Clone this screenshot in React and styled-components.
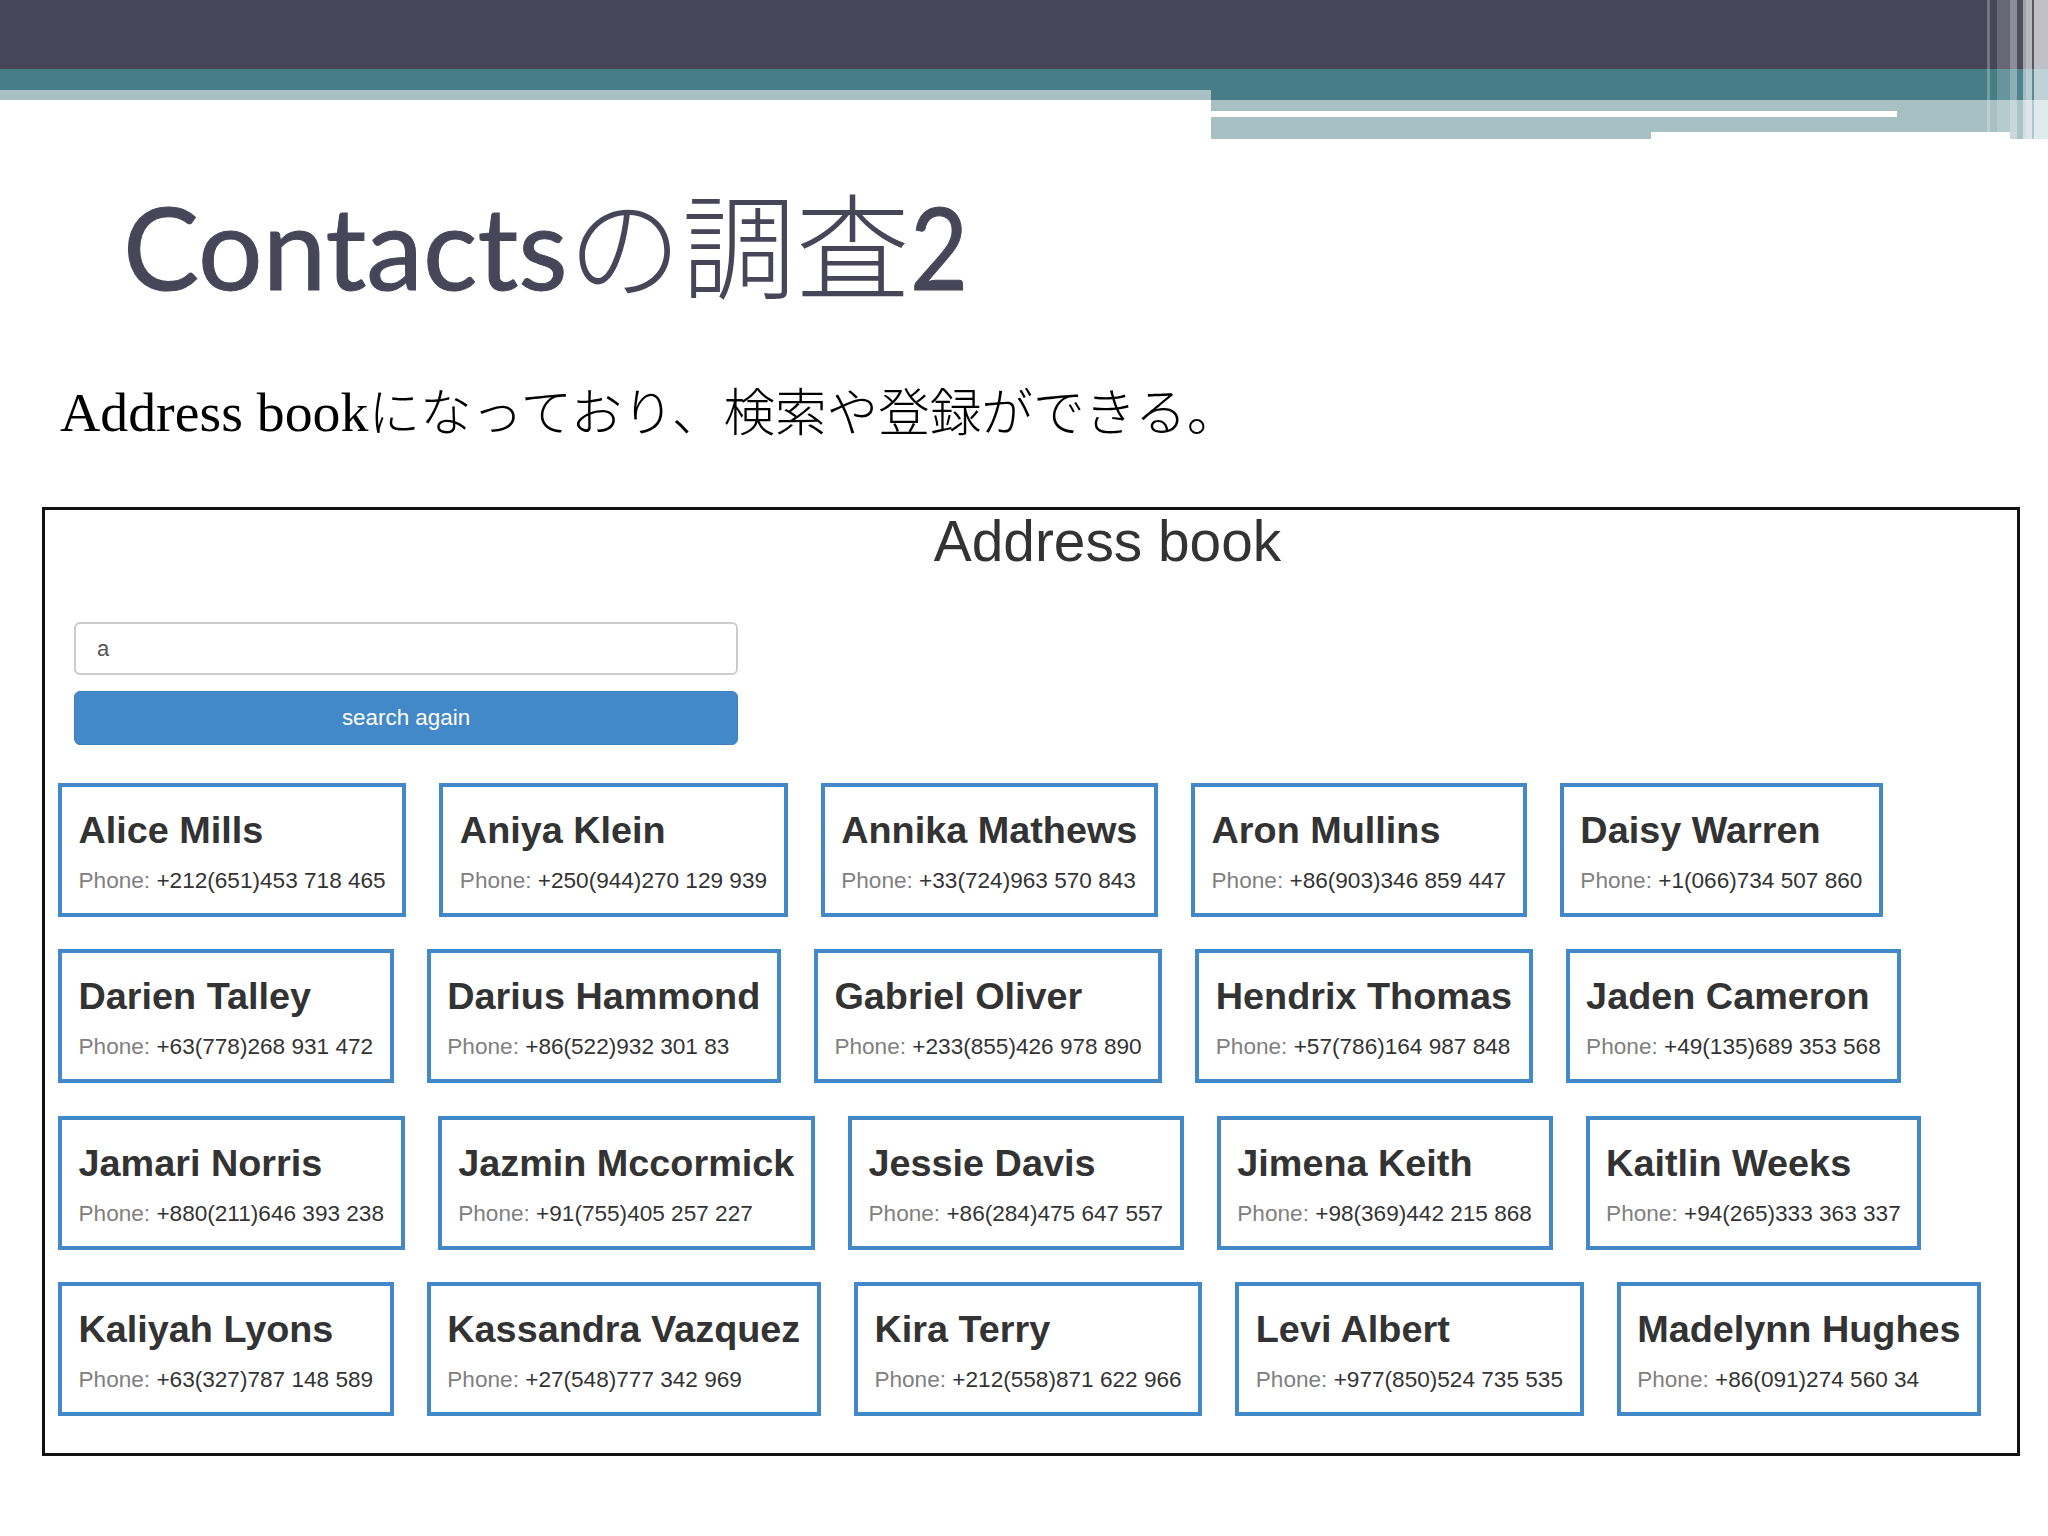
import styled, { createGlobalStyle } from "styled-components";

const rows = [
  [
    ["Alice Mills", "+212(651)453 718 465"],
    ["Aniya Klein", "+250(944)270 129 939"],
    ["Annika Mathews", "+33(724)963 570 843"],
    ["Aron Mullins", "+86(903)346 859 447"],
    ["Daisy Warren", "+1(066)734 507 860"],
  ],
  [
    ["Darien Talley", "+63(778)268 931 472"],
    ["Darius Hammond", "+86(522)932 301 83"],
    ["Gabriel Oliver", "+233(855)426 978 890"],
    ["Hendrix Thomas", "+57(786)164 987 848"],
    ["Jaden Cameron", "+49(135)689 353 568"],
  ],
  [
    ["Jamari Norris", "+880(211)646 393 238"],
    ["Jazmin Mccormick", "+91(755)405 257 227"],
    ["Jessie Davis", "+86(284)475 647 557"],
    ["Jimena Keith", "+98(369)442 215 868"],
    ["Kaitlin Weeks", "+94(265)333 363 337"],
  ],
  [
    ["Kaliyah Lyons", "+63(327)787 148 589"],
    ["Kassandra Vazquez", "+27(548)777 342 969"],
    ["Kira Terry", "+212(558)871 622 966"],
    ["Levi Albert", "+977(850)524 735 535"],
    ["Madelynn Hughes", "+86(091)274 560 34"],
  ],
];

const stripes = [
  [3, 0.25],
  [7, 0],
  [13, 0.18],
  [7, 0.38],
  [6, 0.05],
  [3, 0.5],
  [6, 0.62],
  [2, 0.1],
  [14, 0.66],
];

export default function App() {
  return (
    <Slide>
      <GlobalStyle />
      <Header>
        <TopBand />
        <Bands>
          <LeftBands>
            <Teal $h={21} />
            <Light $h={10} />
          </LeftBands>
          <RightBands>
            <Teal $h={31} />
            <Light $h={11} />
            <StripRow>
              <WhiteStrip />
              <Light $h={6} />
            </StripRow>
            <Light $h={14} />
            <NotchRow>
              <NotchLeft />
              <Notch />
              <Light $h={7} />
            </NotchRow>
          </RightBands>
        </Bands>
        <Stripes>
          {stripes.map(([w, a], i) => (
            <Stripe key={i} $w={w} $a={a} />
          ))}
        </Stripes>
      </Header>

      <Title>
        Contacts<span>の調査</span>
        <TitleDigit>2</TitleDigit>
      </Title>
      <Subtitle>
        Address book<span>になっており、検索や登録ができる。</span>
      </Subtitle>

      <Shot>
        <Heading>Address book</Heading>
        <SearchForm>
          <SearchInput value="a" readOnly />
          <SearchButton>search again</SearchButton>
        </SearchForm>
        <Cards>
          {rows.map((row, i) => (
            <CardRow key={i}>
              {row.map(([name, phone]) => (
                <Card key={name}>
                  <Name>{name}</Name>
                  <Phone>
                    <span>Phone: </span>
                    {phone}
                  </Phone>
                </Card>
              ))}
            </CardRow>
          ))}
        </Cards>
      </Shot>
    </Slide>
  );
}

const GlobalStyle = createGlobalStyle`
  html, body {
    margin: 0;
    padding: 0;
    background: #fff;
  }
  * {
    box-sizing: border-box;
  }
`;

const Slide = styled.div`
  width: 2048px;
  height: 1536px;
  overflow: hidden;
  background: #fff;
`;

const Header = styled.header`
  position: relative;
  height: 139px;
`;
const TopBand = styled.div`
  height: 69px;
  background: #474658;
`;
const Bands = styled.div`
  display: flex;
`;
const LeftBands = styled.div`
  width: 1211px;
`;
const RightBands = styled.div`
  flex: 1;
`;
const Teal = styled.div`
  height: ${(p) => p.$h}px;
  background: #477d86;
`;
const Light = styled.div`
  flex: 1;
  height: ${(p) => p.$h}px;
  background: #a6c0c4;
`;
const StripRow = styled.div`
  display: flex;
  height: 7px;
  background: #a6c0c4;
`;
const WhiteStrip = styled.div`
  width: 686px;
  height: 6px;
  background: #fff;
`;
const NotchRow = styled.div`
  display: flex;
  height: 7px;
`;
const NotchLeft = styled.div`
  width: 440px;
  background: #a6c0c4;
`;
const Notch = styled.div`
  width: 359px;
  background: #fff;
`;
const Stripes = styled.div`
  position: absolute;
  top: 0;
  right: 0;
  bottom: 0;
  display: flex;
`;
const Stripe = styled.div`
  width: ${(p) => p.$w}px;
  background: rgba(255, 255, 255, ${(p) => p.$a});
`;

const Title = styled.h1`
  margin: 0;
  padding: 42px 0 0 123px;
  height: 171px;
  font-family: Lato, "Noto Sans CJK JP", sans-serif;
  font-size: 114px;
  font-weight: 400;
  line-height: 130px;
  color: #474658;
  white-space: nowrap;
  -webkit-text-stroke: 1px #474658;
  span {
    font-weight: 300;
    -webkit-text-stroke: 0;
  }
`;
const TitleDigit = styled.b`
  display: inline-block;
  font-weight: 400;
  transform: scaleX(0.88);
  transform-origin: left;
`;
const Subtitle = styled.p`
  margin: 0;
  padding: 66px 0 0 60px;
  height: 197px;
  font-family: "Liberation Serif", "Noto Sans CJK JP", serif;
  font-size: 55.8px;
  line-height: 72px;
  color: #000;
  white-space: nowrap;
  span {
    font-size: 51.6px;
    font-weight: 300;
  }
`;

const Shot = styled.section`
  width: 1978px;
  height: 949px;
  margin-left: 42px;
  padding: 0 10px 0 13px;
  border: 3px solid #111;
  background: #fff;
  font-family: "Liberation Sans", Arial, sans-serif;
`;
const Heading = styled.h2`
  margin: 0;
  padding-left: 150px;
  height: 112px;
  text-align: center;
  font-size: 56.8px;
  font-weight: 400;
  line-height: 64px;
  color: #333;
`;
const SearchForm = styled.div`
  display: flex;
  flex-direction: column;
  gap: 16px;
  width: 664px;
  margin-left: 16px;
  height: 161px;
`;
const SearchInput = styled.input`
  height: 53px;
  padding: 0 21px;
  border: 2px solid #ccc;
  border-radius: 6px;
  background: #fff;
  font-family: inherit;
  font-size: 22px;
  color: #555;
  outline: none;
`;
const SearchButton = styled.button`
  height: 54px;
  border: 1px solid #3f80bd;
  border-radius: 6px;
  background: #4388c8;
  font-family: inherit;
  font-size: 22.4px;
  color: #fff;
`;
const Cards = styled.div`
  display: flex;
  flex-direction: column;
  gap: 32.3px;
`;
const CardRow = styled.div`
  display: flex;
  gap: 33px;
`;
const Card = styled.div`
  height: 134px;
  padding: 0 16.7px 0 16.5px;
  border: 4px solid #4388c8;
  white-space: nowrap;
`;
const Name = styled.h3`
  margin: 0;
  padding-top: 21px;
  font-size: 37.8px;
  font-weight: 700;
  line-height: 44px;
  color: #333;
`;
const Phone = styled.p`
  margin: 13px 0 0;
  font-size: 22.6px;
  line-height: 32px;
  color: #333;
  span {
    color: #808080;
  }
`;
